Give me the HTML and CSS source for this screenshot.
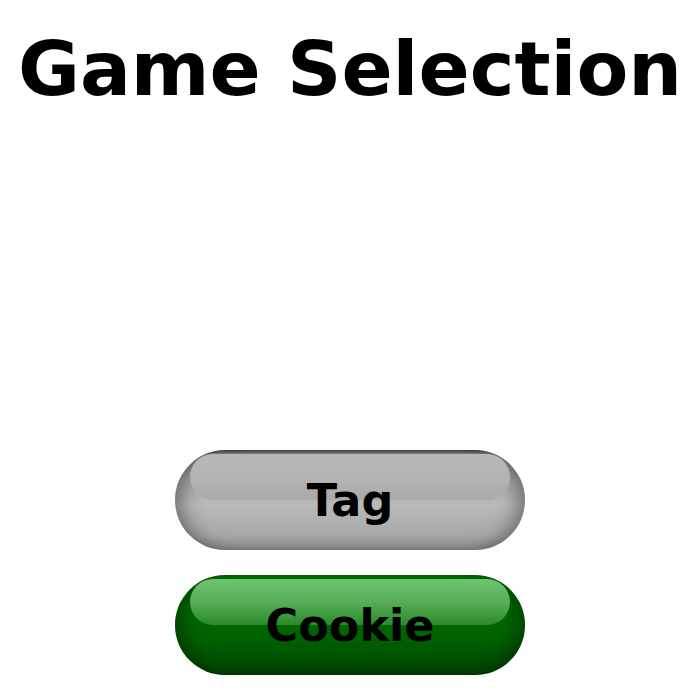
FILE: index.html
```html
<!DOCTYPE html>
<html>
<head>
<meta charset="utf-8">
<link rel="stylesheet" href="styles.css">
</head>
<body>
<div class="page">
  <h1 class="title">Game Selection</h1>
  <div class="buttons">
    <button class="pill pill-gray"><span class="gloss"></span><span class="label">Tag</span></button>
    <button class="pill pill-green"><span class="gloss"></span><span class="label">Cookie</span></button>
  </div>
</div>
</body>
</html>
```

FILE: styles.css
```css
html, body {
  margin: 0;
  padding: 0;
  background: #ffffff;
}
.page {
  width: 700px;
  height: 700px;
  display: flex;
  flex-direction: column;
  align-items: center;
  font-family: "DejaVu Sans", sans-serif;
}
.title {
  margin: 26px 0 0 0;
  font-size: 75.5px;
  font-weight: bold;
  line-height: 86px;
  color: #000;
  white-space: nowrap;
}
.buttons {
  margin-top: 338px;
  display: flex;
  flex-direction: column;
  gap: 25px;
}
.pill {
  position: relative;
  width: 350px;
  height: 100px;
  border: none;
  border-radius: 50px;
  padding: 0;
  font-family: "DejaVu Sans", sans-serif;
  font-weight: bold;
  font-size: 44.5px;
  color: #000;
  display: flex;
  align-items: center;
  justify-content: center;
  overflow: hidden;
}
.pill-gray {
  background: linear-gradient(to bottom, #4a4a4a 0%, #8a8a8a 4%, #a9a9a9 30%, #b9b9b9 55%, #a8a8a8 85%, #909090 100%);
  box-shadow: inset 14px 0 18px -6px rgba(0,0,0,0.35), inset -14px 0 18px -6px rgba(0,0,0,0.35);
}
.pill-green {
  background: linear-gradient(to bottom, #007800 0%, #007000 5%, #006a00 40%, #006000 65%, #004500 100%);
  box-shadow: inset 14px 0 18px -6px rgba(0,0,0,0.35), inset -14px 0 18px -6px rgba(0,0,0,0.35);
}
.gloss {
  position: absolute;
  left: 15px;
  right: 15px;
  top: 4px;
  height: 46px;
  border-radius: 23px;
}
.pill-gray .gloss {
  background: linear-gradient(to bottom, #b8b8b8 0%, #b2b2b2 60%, #a9a9a9 100%);
}
.pill-green .gloss {
  background: linear-gradient(to bottom, #70c470 0%, #58ae58 50%, #2a8a2a 100%);
}
.label {
  position: relative;
  margin-top: 0px;
}
```
